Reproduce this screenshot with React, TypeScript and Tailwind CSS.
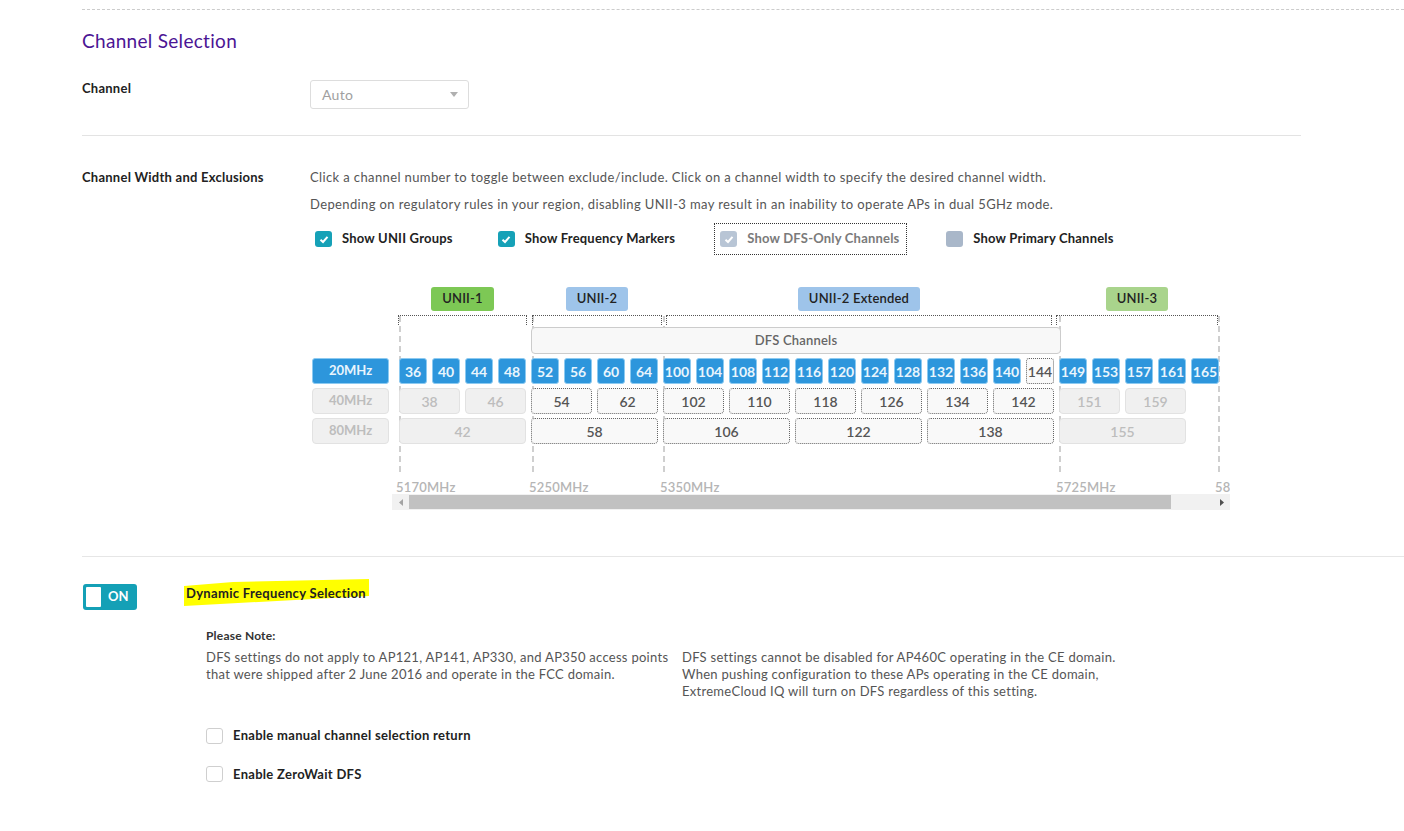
import React from "react";

type Cell = { label: string; span: number; kind: "on" | "off" | "open" | "dis" };

const row20: Cell[] = [
  "36", "40", "44", "48", "52", "56", "60", "64", "100", "104", "108", "112", "116",
  "120", "124", "128", "132", "136", "140", "144", "149", "153", "157", "161", "165",
].map((c) => ({ label: c, span: 1, kind: c === "144" ? "off" : "on" }));

const row40: Cell[] = [
  { label: "38", span: 2, kind: "dis" },
  { label: "46", span: 2, kind: "dis" },
  { label: "54", span: 2, kind: "open" },
  { label: "62", span: 2, kind: "open" },
  { label: "102", span: 2, kind: "open" },
  { label: "110", span: 2, kind: "open" },
  { label: "118", span: 2, kind: "open" },
  { label: "126", span: 2, kind: "open" },
  { label: "134", span: 2, kind: "open" },
  { label: "142", span: 2, kind: "open" },
  { label: "151", span: 2, kind: "dis" },
  { label: "159", span: 2, kind: "dis" },
];

const row80: Cell[] = [
  { label: "42", span: 4, kind: "dis" },
  { label: "58", span: 4, kind: "open" },
  { label: "106", span: 4, kind: "open" },
  { label: "122", span: 4, kind: "open" },
  { label: "138", span: 4, kind: "open" },
  { label: "155", span: 4, kind: "dis" },
];

const groups = [
  { name: "UNII-1", left: 6, width: 129, color: "bg-[#7dc855]" },
  { name: "UNII-2", left: 140, width: 130, color: "bg-[#9ec4ea]" },
  { name: "UNII-2 Extended", left: 274, width: 386, color: "bg-[#9ec4ea]" },
  { name: "UNII-3", left: 664, width: 162, color: "bg-[#a9d48c]" },
];

const markers = [
  { x: 7, label: "5170MHz" },
  { x: 140, label: "5250MHz" },
  { x: 271, label: "5350MHz" },
  { x: 667, label: "5725MHz" },
  { x: 826, label: "5850MHz" },
];

function cellClass(kind: Cell["kind"]) {
  switch (kind) {
    case "on":
      return "bg-[#2d96dc] border border-[#8ccaf1] text-[#e9f5fd] font-bold text-[14px] rounded-[3px]";
    case "off":
      return "bg-[#fafafa] border border-dotted border-[#666] text-[#555] font-semibold text-[14px] rounded-[3px]";
    case "open":
      return "bg-[#f9f9f9] border border-dotted border-[#666] text-[#555] font-semibold text-[14px] rounded-[4px]";
    default:
      return "bg-[#f0f0f0] border border-[#e2e2e2] text-[#bdbdbd] font-semibold text-[14px] rounded-[4px]";
  }
}

function ChannelRow({ cells }: { cells: Cell[] }) {
  return (
    <div className="grid h-[26px] grid-cols-[repeat(25,28px)] gap-x-[5px]">
      {cells.map((c) => (
        <div
          key={c.label}
          className={`flex items-center justify-center ${c.span === 2 ? "col-span-2" : c.span === 4 ? "col-span-4" : ""} ${cellClass(c.kind)}`}
        >
          {c.label}
        </div>
      ))}
    </div>
  );
}

function Check({ checked, disabled }: { checked?: boolean; disabled?: boolean }) {
  return (
    <span
      className={`flex h-[16px] w-[17px] items-center justify-center rounded-[3px] ${
        disabled ? "bg-[#b8c5d5]" : checked ? "bg-[#16a1b7]" : "bg-[#a9b7c9]"
      }`}
    >
      {checked && (
        <svg width="10" height="9" viewBox="0 0 10 9">
          <path d="M1.5 4.8 L4 7 L8.5 1.8" fill="none" stroke="white" strokeWidth="2" />
        </svg>
      )}
    </span>
  );
}

function Chart() {
  return (
    <div className="ml-[2px] mt-[25px] flex">
      <div className="flex w-[77px] flex-col gap-[4px] pt-[78px] text-[13px] font-bold">
        <div className="flex h-[26px] items-center justify-center rounded-[3px] border border-[#8ccaf1] bg-[#2d96dc] text-[#e9f5fd]">
          20MHz
        </div>
        <div className="flex h-[26px] items-center justify-center rounded-[4px] border border-[#e2e2e2] bg-[#f0f0f0] text-[#bdbdbd]">
          40MHz
        </div>
        <div className="flex h-[26px] items-center justify-center rounded-[4px] border border-[#e2e2e2] bg-[#f0f0f0] text-[#bdbdbd]">
          80MHz
        </div>
      </div>
      <div className="ml-[3px] w-[838px] overflow-hidden">
        <div className="relative h-[214px] w-[900px]">
          {markers.map((m) => (
            <div key={m.label}>
              <div
                className="absolute top-[36px] h-[156px] border-l-2 border-dashed border-[#cfcfcf]"
                style={{ left: m.x }}
              />
              <div
                className="absolute top-[198px] text-[13px] font-semibold leading-[18px] tracking-[0.2px] text-[#b5b5b5]"
                style={{ left: m.x - 3 }}
              >
                {m.label}
              </div>
            </div>
          ))}
          {groups.map((g) => (
            <div key={g.name}>
              <div className="absolute top-[7px] flex justify-center" style={{ left: g.left, width: g.width }}>
                <span className={`flex h-[24px] items-center rounded-[3px] px-[11px] text-[13px] font-semibold tracking-[0.2px] text-[#222] ${g.color}`}>
                  {g.name}
                </span>
              </div>
              <div
                className="absolute top-[35px] h-[10px] border-x border-t border-dotted border-[#555]"
                style={{ left: g.left, width: g.width }}
              />
            </div>
          ))}
          <div className="relative flex flex-col gap-[4px] pl-[7px] pt-[47px]">
            <div className="ml-[132px] flex h-[27px] w-[530px] items-center justify-center rounded-[4px] border border-[#cccccc] bg-[#f8f8f8] text-[13px] font-semibold tracking-[0.2px] text-[#666]">
              DFS Channels
            </div>
            <ChannelRow cells={row20} />
            <ChannelRow cells={row40} />
            <ChannelRow cells={row80} />
          </div>
        </div>
        <div className="flex h-[16px] items-center bg-[#f1f1f1]">
          <div className="flex w-[17px] justify-center">
            <svg width="4" height="7" viewBox="0 0 4 7">
              <path d="M4 0 L0 3.5 L4 7 Z" fill="#a3a3a3" />
            </svg>
          </div>
          <div className="h-[14px] w-[762px] bg-[#c1c1c1]" />
          <div className="ml-auto flex w-[17px] justify-center">
            <svg width="4" height="7" viewBox="0 0 4 7">
              <path d="M0 0 L4 3.5 L0 7 Z" fill="#505050" />
            </svg>
          </div>
        </div>
      </div>
    </div>
  );
}

export default function App() {
  return (
    <div className="min-h-[831px] w-[1404px] bg-white pt-[9px] text-[#222]" style={{ fontFamily: "Lato, 'Open Sans', sans-serif" }}>
      <div className="ml-[82px] border-t border-dashed border-[#cccccc]" />

      <div className="pl-[82px]">
        <h1 className="mt-[19px] text-[19px] leading-[24px] tracking-[0.3px] text-[#4b1594]">Channel Selection</h1>

        <div className="mt-[27px] flex">
          <div className="w-[228px] text-[13px] font-bold leading-[16px] tracking-[0.25px]">Channel</div>
          <div className="flex h-[29px] w-[159px] items-center justify-between rounded-[3px] border border-[#dddddd] pl-[11px] pr-[10px]">
            <span className="text-[14px] tracking-[0.3px] text-[#a0a0a0]">Auto</span>
            <svg width="8" height="5" viewBox="0 0 8 5">
              <path d="M0 0 L8 0 L4 5 Z" fill="#b0b0b0" />
            </svg>
          </div>
        </div>

        <div className="mt-[26px] w-[1219px] border-t border-[#e3e3e3]" />

        <div className="mt-[33px] flex">
          <div className="w-[228px] text-[13px] font-bold leading-[16px] tracking-[0.25px]">Channel Width and Exclusions</div>
          <div>
            <p className="text-[13px] leading-[16px] tracking-[0.38px] text-[#555]">
              Click a channel number to toggle between exclude/include. Click on a channel width to specify the desired channel width.
            </p>
            <p className="mt-[11px] text-[13px] leading-[16px] tracking-[0.38px] text-[#555]">
              Depending on regulatory rules in your region, disabling UNII-3 may result in an inability to operate APs in dual 5GHz mode.
            </p>
            <div className="mt-[11px] flex h-[32px] items-center text-[13px] font-bold tracking-[0.2px]">
              <label className="ml-[5px] flex items-center gap-[10px]">
                <Check checked />
                Show UNII Groups
              </label>
              <label className="ml-[45px] flex items-center gap-[10px]">
                <Check checked />
                Show Frequency Markers
              </label>
              <label className="ml-[39px] flex h-[32px] w-[193px] items-center gap-[10px] border border-dotted border-[#333] pl-[5px] text-[#7a7a7a]">
                <Check checked disabled />
                Show DFS-Only Channels
              </label>
              <label className="ml-[39px] flex items-center gap-[10px]">
                <Check />
                Show Primary Channels
              </label>
            </div>
            <Chart />
          </div>
        </div>

        <div className="mt-[46px] border-t border-[#e6e6e6]" />

        <div className="mt-[27px] flex items-start">
          <div className="ml-[1px] flex h-[26px] w-[54px] items-center rounded-[3px] bg-[#14a0b6] pl-[3px]">
            <span className="h-[20px] w-[15px] rounded-[1px] bg-white" />
            <span className="ml-[7px] text-[13px] font-bold text-white">ON</span>
          </div>
          <div className="relative ml-[49px] h-[16px] leading-[16px]">
            <svg className="absolute left-[-3px] top-[-6px]" width="190" height="30" viewBox="0 0 190 30">
              <path d="M1 8 L50 4 L186 1 L186 18 L1 28 Z" fill="#ffff00" />
            </svg>
            <span className="relative text-[13px] font-bold leading-[16px] tracking-[0.33px]">Dynamic Frequency Selection</span>
          </div>
        </div>

        <div className="ml-[124px] mt-[18px]">
          <div className="text-[12px] font-bold leading-[16px] tracking-[0.2px] text-[#333]">Please Note:</div>
          <div className="mt-[5px] flex text-[13px] leading-[17px] tracking-[0.28px] text-[#555]">
            <p className="w-[476px]">
              DFS settings do not apply to AP121, AP141, AP330, and AP350 access points
              <br />
              that were shipped after 2 June 2016 and operate in the FCC domain.
            </p>
            <p>
              DFS settings cannot be disabled for AP460C operating in the CE domain.
              <br />
              When pushing configuration to these APs operating in the CE domain,
              <br />
              ExtremeCloud IQ will turn on DFS regardless of this setting.
            </p>
          </div>

          <label className="mt-[26px] flex items-center gap-[10px] text-[13px] font-bold tracking-[0.3px]">
            <span className="h-[16px] w-[17px] rounded-[3px] border border-[#cfcfcf] bg-white" />
            Enable manual channel selection return
          </label>
          <label className="mt-[19px] flex items-center gap-[10px] text-[13px] font-bold tracking-[0.3px]">
            <span className="h-[16px] w-[17px] rounded-[3px] border border-[#cfcfcf] bg-white" />
            Enable ZeroWait DFS
          </label>
        </div>
      </div>
    </div>
  );
}
